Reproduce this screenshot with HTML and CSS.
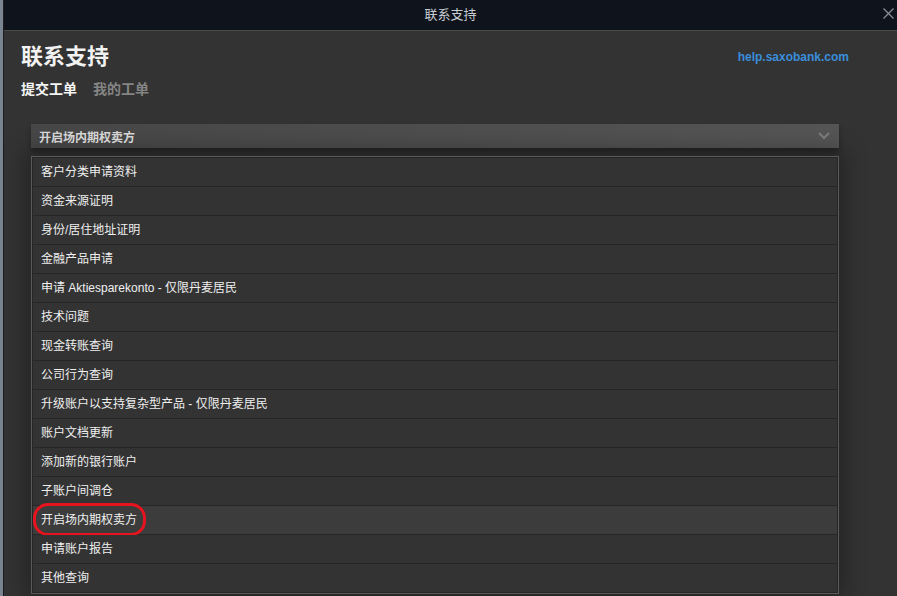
FILE: index.html
```html
<!DOCTYPE html>
<html>
<head>
    <title>联系支持</title>
    <link rel="stylesheet" href="styles.css">
</head>
<body>
    <div class="window">
        <div class="titlebar">
            <span class="titlebar-text">联系支持</span>
            <a class="close" href="javascript:void(0)">
                <svg width="11" height="11" viewBox="0 0 11 11"><path d="M0.5 0.5L10.5 10.5M10.5 0.5L0.5 10.5" stroke="#8b9098" stroke-width="1.2" fill="none"/></svg>
            </a>
        </div>
        <div class="content">
            <div class="header">
                <h1>联系支持</h1>
                <a class="help-link" href="javascript:void(0)">help.saxobank.com</a>
            </div>
            <div class="tabs">
                <a class="tab active" href="javascript:void(0)">提交工单</a>
                <a class="tab" href="javascript:void(0)">我的工单</a>
            </div>
            <div class="select">
                <div class="select-bar">
                    <span>开启场内期权卖方</span>
                    <svg class="chevron" width="12" height="8" viewBox="0 0 12 8"><path d="M1 1L6 6L11 1" stroke="#7a7a7a" stroke-width="2" fill="none"/></svg>
                </div>
                <div class="options">
                    <ul>
                        <li>客户分类申请资料</li>
                        <li>资金来源证明</li>
                        <li>身份/居住地址证明</li>
                        <li>金融产品申请</li>
                        <li>申请 Aktiesparekonto - 仅限丹麦居民</li>
                        <li>技术问题</li>
                        <li>现金转账查询</li>
                        <li>公司行为查询</li>
                        <li>升级账户以支持复杂型产品 - 仅限丹麦居民</li>
                        <li>账户文档更新</li>
                        <li>添加新的银行账户</li>
                        <li>子账户间调仓</li>
                        <li class="selected">开启场内期权卖方<span class="mark"></span></li>
                        <li>申请账户报告</li>
                        <li>其他查询</li>
                    </ul>
                </div>
            </div>
        </div>
    </div>
</body>
</html>
```

FILE: styles.css
```css
* {
    margin: 0;
    padding: 0;
}

html, body {
    height: 100%;
    overflow: hidden;
}

body {
    background: #7b8591;
    font-family: "Liberation Sans", "Noto Sans CJK SC", sans-serif;
}

a {
    text-decoration: none;
}

.window {
    margin-left: 3px;
    height: 100%;
    background: #333333;
    border-left: 1px solid #1b1d20;
}

.titlebar {
    height: 30px;
    background: #0f141c;
    border-bottom: 1px solid #4a4a4a;
    position: relative;
    text-align: center;
    line-height: 28px;
}

.titlebar-text {
    color: #c6cbd1;
    font-size: 13px;
}

.titlebar .close {
    position: absolute;
    right: 3px;
    top: 8px;
    line-height: 0;
}

.content {
    padding: 11px 0 0 17px;
}

.header {
    display: flex;
    align-items: center;
    width: 828px;
    justify-content: space-between;
}

.header h1 {
    font-size: 22px;
    line-height: 30px;
    color: #f2f2f2;
    font-weight: bold;
}

.help-link {
    color: #3a8edb;
    font-size: 12px;
    font-weight: bold;
    margin-top: -1px;
}

.tabs {
    margin-top: 7px;
    display: flex;
    gap: 16px;
    line-height: 20px;
}

.tab {
    font-size: 14px;
    font-weight: bold;
    color: #858585;
}

.tab.active {
    color: #f5f5f5;
}

.select {
    margin: 25px 0 0 10px;
    width: 808px;
}

.select-bar {
    height: 24px;
    background: linear-gradient(to right, #474747, #555555);
    box-shadow: 0 4px 5px rgba(0, 0, 0, 0.3);
    display: flex;
    align-items: center;
    justify-content: space-between;
    padding: 0 8px;
    color: #d4d4d4;
    font-size: 12px;
    font-weight: bold;
}

.chevron {
    margin-right: 1px;
}

.options {
    margin-top: 8px;
    border: 1px solid #5a5a5a;
    box-shadow: 0 0 22px 6px rgba(0, 0, 0, 0.3);
}

.options ul {
    list-style: none;
    border: 1px solid #262626;
    border-bottom: none;
}

.options li {
    height: 28px;
    line-height: 28px;
    border-bottom: 1px solid #262626;
    padding-left: 8px;
    font-size: 12px;
    color: #efefef;
    background: #333333;
    position: relative;
}

.options li.selected {
    background: #3c3c3c;
}

.mark {
    position: absolute;
    left: 0;
    top: -3px;
    width: 107px;
    height: 27px;
    border: 3.5px solid #e5141e;
    border-radius: 15px;
}
```
